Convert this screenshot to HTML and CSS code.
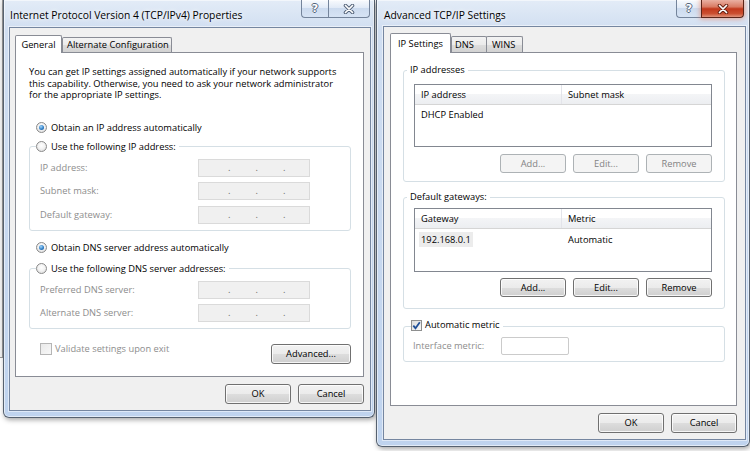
FILE: index.html
```html
<!DOCTYPE html>
<html>
<head>
<meta charset="utf-8">
<link rel="stylesheet" href="styles.css">
</head>
<body>
<div class="bgwin"></div>

<div class="win win-left">
  <div class="titlebar">
    <span class="title">Internet Protocol Version 4 (TCP/IPv4) Properties</span>
    <div class="caps">
      <span class="cbtn help">?</span>
      <span class="cbtn close"><svg width="12" height="10" viewBox="0 0 12 10"><path d="M2.5 1.5 9.5 8.5M9.5 1.5 2.5 8.5" stroke="#55647a" stroke-width="3.6" stroke-linecap="round"/><path d="M2.5 1.5 9.5 8.5M9.5 1.5 2.5 8.5" stroke="#fff" stroke-width="1.7" stroke-linecap="round"/></svg></span>
    </div>
  </div>
  <div class="client">
    <div class="tabs">
      <span class="tab sel tab-general">General</span>
      <span class="tab tab-alt">Alternate Configuration</span>
    </div>
    <div class="panel panel-gen">
      <p class="intro">You can get IP settings assigned automatically if your network supports<br>this capability. Otherwise, you need to ask your network administrator<br>for the appropriate IP settings.</p>
      <div class="opt opt-ip"><span class="radio on"></span><span>Obtain an IP address automatically</span></div>
      <fieldset class="grp grp-ip">
        <legend><span class="opt"><span class="radio"></span><span>Use the following IP address:</span></span></legend>
        <div class="fields">
          <span class="dis">IP address:</span><span class="ipbox"><i>.</i><i>.</i><i>.</i></span>
          <span class="dis">Subnet mask:</span><span class="ipbox"><i>.</i><i>.</i><i>.</i></span>
          <span class="dis">Default gateway:</span><span class="ipbox"><i>.</i><i>.</i><i>.</i></span>
        </div>
      </fieldset>
      <div class="opt opt-dns"><span class="radio on"></span><span>Obtain DNS server address automatically</span></div>
      <fieldset class="grp grp-dns">
        <legend><span class="opt"><span class="radio"></span><span>Use the following DNS server addresses:</span></span></legend>
        <div class="fields fields-dns">
          <span class="dis">Preferred DNS server:</span><span class="ipbox"><i>.</i><i>.</i><i>.</i></span>
          <span class="dis">Alternate DNS server:</span><span class="ipbox"><i>.</i><i>.</i><i>.</i></span>
        </div>
      </fieldset>
      <div class="bottom-row">
        <div class="chk"><span class="checkbox dis-box"></span><span class="dis">Validate settings upon exit</span></div>
        <span class="btn btn-adv">Advanced...</span>
      </div>
    </div>
    <div class="footer">
      <span class="btn">OK</span>
      <span class="btn">Cancel</span>
    </div>
  </div>
</div>

<div class="win win-right">
  <div class="titlebar">
    <span class="title">Advanced TCP/IP Settings</span>
    <div class="caps">
      <span class="cbtn help">?</span>
      <span class="cbtn close red"><svg width="12" height="10" viewBox="0 0 12 10"><path d="M2.5 1.5 9.5 8.5M9.5 1.5 2.5 8.5" stroke="#6a2416" stroke-width="3.6" stroke-linecap="round"/><path d="M2.5 1.5 9.5 8.5M9.5 1.5 2.5 8.5" stroke="#fff" stroke-width="1.7" stroke-linecap="round"/></svg></span>
    </div>
  </div>
  <div class="client">
    <div class="tabs">
      <span class="tab sel tab-ips">IP Settings</span>
      <span class="tab tab-dns">DNS</span>
      <span class="tab tab-wins">WINS</span>
    </div>
    <div class="panel panel-adv">
      <fieldset class="grp grp-addr">
        <legend class="lg-text">IP addresses</legend>
        <div class="listbox">
          <div class="lb-head"><span>IP address</span><span>Subnet mask</span></div>
          <div class="lb-row"><span>DHCP Enabled</span><span></span></div>
        </div>
        <div class="btnrow">
          <span class="btn dis-btn">Add...</span>
          <span class="btn dis-btn">Edit...</span>
          <span class="btn dis-btn">Remove</span>
        </div>
      </fieldset>
      <fieldset class="grp grp-gw">
        <legend class="lg-text">Default gateways:</legend>
        <div class="listbox listbox-gw">
          <div class="lb-head"><span>Gateway</span><span>Metric</span></div>
          <div class="lb-row lb-row-gw"><span><b class="sel-item">192.168.0.1</b></span><span>Automatic</span></div>
        </div>
        <div class="btnrow btnrow-gw">
          <span class="btn">Add...</span>
          <span class="btn">Edit...</span>
          <span class="btn">Remove</span>
        </div>
      </fieldset>
      <fieldset class="grp grp-metric">
        <legend class="lg-chk"><span class="chk"><span class="checkbox on"><svg width="9" height="9" viewBox="0 0 9 9"><path d="M1.3 4.6 3.5 7.2 7.8 1.3" fill="none" stroke="#1f4f98" stroke-width="1.8"/></svg></span><span>Automatic metric</span></span></legend>
        <div class="metric-row">
          <span class="dis">Interface metric:</span>
          <span class="numbox"></span>
        </div>
      </fieldset>
    </div>
    <div class="footer">
      <span class="btn">OK</span>
      <span class="btn">Cancel</span>
    </div>
  </div>
</div>
</body>
</html>
```

FILE: styles.css
```css
* { box-sizing: border-box; }
html, body { margin: 0; padding: 0; }
body {
  width: 750px;
  height: 451px;
  overflow: hidden;
  position: relative;
  background: #fff;
  font-family: "Open Sans", "Noto Sans", sans-serif;
  font-size: 9.3px;
  line-height: 12px;
  color: #000;
}

.bgwin {
  position: absolute;
  left: 0;
  top: 0;
  width: 3px;
  height: 358px;
  background: #f3f3f3;
  border-right: 1px solid #9a9a9a;
  border-bottom: 1px solid #9a9a9a;
}

/* window frame */
.win {
  position: absolute;
  top: 0;
  display: flex;
  flex-direction: column;
  border: 1px solid #56616f;
  border-top: 0;
  border-radius: 0 0 6px 6px;
  background: linear-gradient(180deg, #e3ecf7 0, #d0def1 30px, #bfd3ee 100%);
  box-shadow: 1px 2px 5px rgba(0,0,0,.35), inset 0 0 0 1px rgba(255,255,255,.55);
}
.win-left { left: 3px; width: 372px; height: 418px; padding: 0 3px 6px 5px; }
.win-right { left: 376px; width: 374px; height: 447px; padding: 0 3px 6px 6px; }

.titlebar { display: flex; justify-content: space-between; align-items: flex-start; flex: none; }
.win-left .titlebar { height: 27px; }
.win-right .titlebar { height: 26px; }
.title {
  padding: 9px 0 0 1px;
  font-size: 10.3px;
  text-shadow: 0 0 4px #fff, 0 0 8px rgba(255,255,255,.9);
}

.caps { display: flex; }
.win-left .caps { margin-right: 1px; }
.win-right .caps { margin-right: 2px; }
.cbtn {
  height: 18px;
  display: flex;
  align-items: center;
  justify-content: center;
  border: 1px solid #74849b;
  border-top: 0;
  background: linear-gradient(180deg, rgba(255,255,255,.75) 0, rgba(226,235,247,.75) 45%, rgba(198,214,236,.75) 50%, rgba(214,227,244,.75) 100%);
}
.cbtn.help {
  width: 27px;
  border-right: 0;
  border-radius: 0 0 0 4px;
  font-family: "DejaVu Sans", sans-serif;
  font-weight: bold;
  font-size: 11px;
  color: #fff;
  text-shadow: 1px 0 0 #55647a, -1px 0 0 #55647a, 0 1px 0 #55647a, 0 -1px 0 #55647a;
}
.cbtn.close { width: 42px; border-radius: 0 0 4px 0; }
.win-right .cbtn.help { width: 25px; }
.win-right .cbtn.close { width: 43px; }
.cbtn.red {
  border-color: #5c2418;
  background: linear-gradient(180deg, #eab0a2 0, #d97b64 40%, #c2381c 52%, #cb4f30 80%, #e0927a 100%);
  box-shadow: 0 0 5px 1px rgba(235,110,70,.55);
}

/* client area */
.client {
  flex: 1;
  display: flex;
  flex-direction: column;
  background: #f0f0f0;
  border: 1px solid #7586a0;
  box-shadow: 0 0 0 1px rgba(255,255,255,.5);
}
.win-left .client { padding: 7px 6px 6px 5px; }
.win-right .client { padding: 6px 8px 6px 6px; }

/* tabs */
.tabs { display: flex; align-items: flex-end; flex: none; position: relative; z-index: 1; }
.win-left .tabs { height: 17px; }
.win-right .tabs { height: 19px; }
.tab {
  height: 15px;
  display: flex;
  align-items: center;
  border: 1px solid #898c95;
  border-bottom: 0;
  border-radius: 2px 2px 0 0;
  background: linear-gradient(180deg, #f3f3f3 0, #ebebeb 50%, #dddddd 51%, #d2d2d2 100%);
  white-space: nowrap;
}
.tab.sel { height: 18px; margin-bottom: -1px; background: #fff; justify-content: center; }
.tab-general { width: 47px; }
.tab-alt { width: 110px; padding-left: 4px; }
.win-right .tab { height: 16px; }
.win-right .tab.sel { height: 20px; }
.tab-ips { width: 61px; }
.tab-dns { width: 36px; padding-left: 3px; }
.tab-wins { width: 37px; padding-left: 5px; margin-left: -1px; }

.panel {
  flex: none;
  border: 1px solid #898c95;
  background: #fff;
  display: flex;
  flex-direction: column;
  align-items: flex-start;
}
.panel-gen { height: 325px; padding: 12px 12px 0 13px; }
.panel-adv { height: 354px; padding: 10px 11px 0 12px; }

.footer { display: flex; justify-content: flex-end; gap: 7px; margin-top: 7px; flex: none; }

.btn {
  width: 66px;
  height: 20px;
  display: flex;
  align-items: center;
  justify-content: center;
  border: 1px solid #707070;
  border-radius: 3px;
  background: linear-gradient(180deg, #f2f2f2 0, #ebebeb 50%, #dddddd 51%, #cfcfcf 100%);
  box-shadow: inset 0 0 0 1px rgba(255,255,255,.8);
  white-space: nowrap;
}
.btn.dis-btn {
  border-color: #adb2b5;
  background: #f4f4f4;
  color: #838383;
  box-shadow: none;
}

/* general panel */
.intro { margin: 0; line-height: 11.6px; padding-top: 1px; white-space: nowrap; }

.opt { display: flex; align-items: center; gap: 4px; height: 14px; white-space: nowrap; }
.opt-ip { margin: 20px 0 0 7px; }
.opt-dns { margin: 10px 0 0 7px; }

.radio {
  flex: none;
  width: 11px;
  height: 11px;
  border-radius: 50%;
  border: 1px solid #8a8a8a;
  background: radial-gradient(circle at 50% 40%, #ffffff 0, #f3f3f3 45%, #d3d3d3 100%);
  display: flex;
  align-items: center;
  justify-content: center;
}
.radio.on::after {
  content: "";
  width: 5px;
  height: 5px;
  border-radius: 50%;
  background: radial-gradient(circle at 40% 35%, #a8d8fa 0, #2f80c8 55%, #0e4787 100%);
}

.grp {
  margin: 0;
  min-width: 0;
  width: 322px;
  border: 1px solid #d5dfe5;
  border-radius: 3px;
}
.grp legend { padding: 0 3px 0 0; margin-left: -4px; height: 14px; }
.grp-ip { margin-top: 5px; padding: 5px 10px 6px; }
.grp-dns { margin-top: 7px; padding: 5px 10px 6px; }

.fields {
  display: grid;
  grid-template-columns: 158px 112px;
  row-gap: 5.5px;
  align-items: center;
}
.fields-dns { row-gap: 5px; }
.dis { color: #8d8d8d; white-space: nowrap; }
.ipbox {
  height: 18px;
  border: 1px solid #dadada;
  background: #f0f0f0;
  display: flex;
  align-items: center;
  padding-left: 29px;
  gap: 25.5px;
  color: #6a6a6a;
}
.ipbox i { font-style: normal; width: 2px; }

.bottom-row {
  display: flex;
  justify-content: space-between;
  align-items: flex-start;
  width: 322px;
  margin-top: 14px;
  padding-left: 11px;
}
.chk { display: flex; align-items: center; gap: 3px; white-space: nowrap; }
.checkbox {
  flex: none;
  width: 12px;
  height: 12px;
  border: 1px solid #8e8f8f;
  background: linear-gradient(135deg, #dcdcdc 0, #f7f7f7 100%);
  display: flex;
  align-items: center;
  justify-content: center;
}
.checkbox.dis-box { border-color: #b5b5b5; background: linear-gradient(135deg, #e9e9e9 0, #f8f8f8 100%); }
.checkbox.on { width: 11px; height: 11px; }
.btn-adv { width: 80px; margin-top: 1px; }

/* advanced panel */
.lg-text { padding: 0 3px !important; margin-left: -7px !important; white-space: nowrap; display: flex; align-items: center; }
.grp-addr { padding: 7px 12px 8px 10px; }
.grp-gw { margin-top: 8px; padding: 4px 12px 11px 10px; }
.grp-metric { margin-top: 10px; padding: 4px 12px 6px 9px; }
.grp-metric .lg-chk { margin-left: -2px; padding: 0 3px 0 0; }

.listbox { height: 63px; border: 1px solid #828790; background: #fff; }
.listbox-gw { height: 64px; }
.lb-head {
  display: grid;
  grid-template-columns: 147px 1fr;
  height: 20px;
  background: linear-gradient(180deg, #ffffff 0, #ffffff 45%, #f4f5f7 46%, #eceef1 100%);
  border-bottom: 1px solid #d5d5d5;
}
.lb-head span { display: flex; align-items: center; padding-left: 6px; }
.lb-head span:first-child { border-right: 1px solid #e3e4ea; }
.lb-row { display: grid; grid-template-columns: 147px 1fr; height: 14px; margin-top: 3px; align-items: center; }
.lb-row span { padding-left: 6px; white-space: nowrap; }
.lb-row-gw { margin-top: 4px; }
.sel-item { font-weight: normal; background: #ececec; margin-left: -2px; padding: 1px 2px; }

.btnrow { display: flex; justify-content: flex-end; gap: 7px; margin-top: 7px; }
.btnrow .btn { height: 19px; }
.btnrow-gw { margin-top: 6px; }

.metric-row { display: grid; grid-template-columns: 88px 68px; align-items: center; }
.numbox { height: 18px; border: 1px solid #cbcbcb; border-radius: 2px; background: #fff; }
```
